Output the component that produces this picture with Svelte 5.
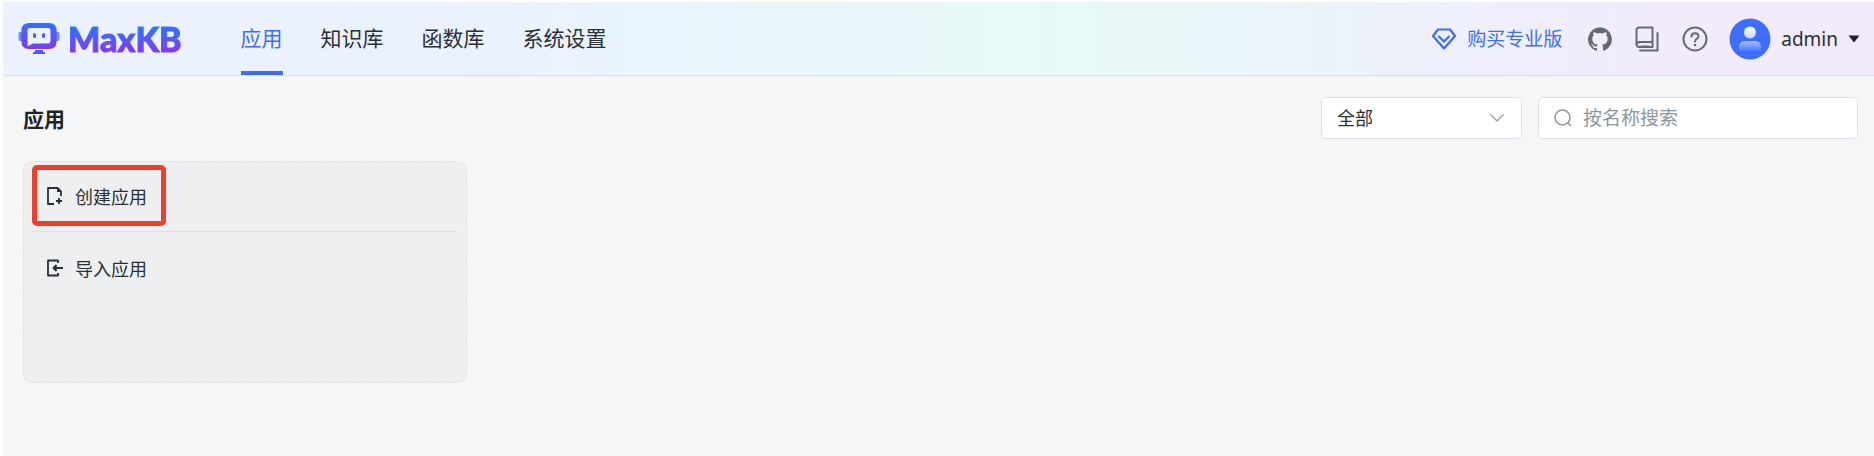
<script>
  const navItems = ['应用', '知识库', '函数库', '系统设置'];
  let active = $state('应用');
  let scope = $state('all');
  let keyword = $state('');
</script>

<div class="page">
  <header class="topbar">
    <a class="brand" href="#home" aria-label="MaxKB">
      <svg class="brand-icon" viewBox="0 0 42 32" aria-hidden="true">
        <defs>
          <linearGradient id="logo-fill" x1="0" y1="0" x2="0" y2="1">
            <stop offset="0" stop-color="#3370ff" />
            <stop offset="1" stop-color="#7f3bf5" />
          </linearGradient>
          <linearGradient id="logo-stand" x1="0" y1="0" x2="0" y2="1">
            <stop offset="0" stop-color="#3f6cf8" />
            <stop offset="1" stop-color="#7f3bf5" />
          </linearGradient>
        </defs>
        <path fill="#6f8cf8" d="M4 9H2Q.5 9 .5 11V16Q.5 18 2 18H4ZM38 9H40Q41.500 9 41.500 11V16Q41.500 18 40 18H38Z" />
        <path
          fill="url(#logo-fill)"
          fill-rule="evenodd"
          d="M11 0H31Q38.600 0 38.600 8V18Q38.600 26 31 26H11Q3.400 26 3.400 18V8Q3.400 0 11 0ZM12 5Q9.500 5 9.500 7.500V23.500L15 20.500H30Q32.500 20.500 32.500 18V7.500Q32.500 5 30 5Z"
        />
        <path fill="#5a57f5" d="M15 11.500Q15 10 16.500 10Q18 10 18 11.500V13.500Q18 15 16.500 15Q15 15 15 13.500ZM24 11.500Q24 10 25.500 10Q27 10 27 11.500V13.500Q27 15 25.500 15Q24 15 24 13.500Z" />
        <path fill="url(#logo-stand)" d="M17 27H25V29H27V31H15V29H17Z" />
      </svg>
      <span class="brand-name">MaxKB</span>
    </a>

    <nav class="nav" aria-label="主导航">
      {#each navItems as item}
        <a
          href="#{item}"
          class="nav-item"
          class:active={active === item}
          onclick={() => (active = item)}>{item}</a>
      {/each}
    </nav>

    <div class="tools">
      <a class="upgrade" href="#pro">
        <svg width="26" height="24" viewBox="0 0 26 24" fill="none" stroke="currentColor" stroke-width="2.2" stroke-linejoin="round" aria-hidden="true">
          <path d="M7 2.500H19L24 9L13 21.500L2 9Z" />
          <path d="M8 9.500L13 14.500L18 9.500" stroke-linecap="round" />
        </svg>
        <span>购买专业版</span>
      </a>
      <div class="links">
        <button type="button" aria-label="GitHub">
          <svg width="24" height="24" viewBox="0 0 24 24" fill="currentColor" aria-hidden="true">
            <path d="M12 .3a12 12 0 0 0-3.800 23.380c.6.12.83-.26.83-.57L9 21.070c-3.340.72-4.040-1.610-4.040-1.610-.55-1.390-1.340-1.760-1.340-1.760-1.080-.74.090-.73.090-.73 1.200.09 1.830 1.240 1.830 1.240 1.080 1.830 2.810 1.300 3.500 1 .1-.78.420-1.310.760-1.610-2.670-.3-5.470-1.330-5.470-5.930 0-1.310.470-2.380 1.240-3.220-.14-.3-.54-1.520.1-3.180 0 0 1-.32 3.300 1.230a11.500 11.500 0 0 1 6 0c2.280-1.550 3.290-1.230 3.290-1.230.64 1.660.24 2.880.12 3.180a4.650 4.650 0 0 1 1.230 3.220c0 4.610-2.800 5.630-5.480 5.920.42.36.81 1.100.81 2.220l-.01 3.290c0 .31.2.69.820.57A12 12 0 0 0 12 .3" />
          </svg>
        </button>
        <button type="button" aria-label="文档">
          <svg width="24" height="26" viewBox="0 0 24 26" fill="none" stroke="currentColor" stroke-width="2" stroke-linejoin="round" aria-hidden="true">
            <path d="M4 1.500H17.500V21H4A2.500 2.500 0 0 1 1.500 18.500V4A2.500 2.500 0 0 1 4 1.500Z" />
            <path d="M1.500 18.500A2.500 2.500 0 0 1 4 16H17.500" />
            <path d="M22.500 7V24.500H5" stroke-linecap="round" />
            <path d="M6 20.500H14" />
          </svg>
        </button>
        <button type="button" aria-label="帮助">
          <svg width="26" height="26" viewBox="0 0 26 26" fill="none" stroke="currentColor" stroke-width="2" aria-hidden="true">
            <circle cx="13" cy="13" r="11.500" />
            <path d="M9.500 10.500C9.500 8.500 11 7.200 13 7.200S16.500 8.500 16.500 10.200C16.500 12.600 13 12.800 13 15.500" stroke-linecap="round" />
            <circle cx="13" cy="19" r="1.300" fill="currentColor" stroke="none" />
          </svg>
        </button>
      </div>
      <button class="account" type="button">
        <svg width="42" height="42" viewBox="0 0 42 42" aria-hidden="true">
          <defs>
            <linearGradient id="avatar-head" x1="0" y1="0" x2="0" y2="1">
              <stop offset="0" stop-color="#fff" />
              <stop offset="1" stop-color="#c5d5ff" />
            </linearGradient>
            <linearGradient id="avatar-body" x1="0" y1="0" x2="0" y2="1">
              <stop offset="0" stop-color="#a9c1ff" />
              <stop offset="1" stop-color="#4a78ff" />
            </linearGradient>
          </defs>
          <circle cx="21" cy="21" r="20.500" fill="#3d6eff" />
          <path d="M10 33V29Q10 23 16 23H26Q32 23 32 29V33Z" fill="url(#avatar-body)" />
          <circle cx="21" cy="14.500" r="6" fill="url(#avatar-head)" />
        </svg>
        <span>admin</span>
        <svg width="12" height="8" viewBox="0 0 12 8" fill="#1f2329" aria-hidden="true">
          <path d="M.5.5H11.500L6 7.500Z" />
        </svg>
      </button>
    </div>
  </header>

  <main class="content">
    <div class="heading">
      <h1>应用</h1>
      <div class="filters">
        <div class="select-wrap">
          <select aria-label="范围" bind:value={scope}>
            <option value="all">全部</option>
          </select>
          <svg class="chevron" width="16" height="10" viewBox="0 0 16 10" fill="none" stroke="#a0a3a9" stroke-width="1.500" aria-hidden="true">
            <path d="M1.500 1.500L8 8L14.500 1.500" />
          </svg>
        </div>
        <label class="search">
          <svg width="18" height="18" viewBox="0 0 18 18" fill="none" stroke="#8f959e" stroke-width="1.500" aria-hidden="true">
            <circle cx="8.500" cy="8.500" r="7.500" />
            <path d="M14 14L17 17" />
          </svg>
          <input type="text" placeholder="按名称搜索" aria-label="按名称搜索" bind:value={keyword} />
        </label>
      </div>
    </div>

    <section class="card">
      <button class="action highlighted" type="button">
        <svg width="18" height="20" viewBox="0 0 18 20" fill="none" stroke="currentColor" stroke-width="1.800" stroke-linejoin="round" aria-hidden="true">
          <path d="M8 18H2V2H11.500L15 5.500V10" />
          <path d="M11 2L15 6H11Z" fill="currentColor" stroke="none" />
          <path d="M13 12V18M10 15H16" />
        </svg>
        <span>创建应用</span>
      </button>
      <hr />
      <button class="action" type="button">
        <svg width="18" height="20" viewBox="0 0 18 20" fill="none" stroke="currentColor" stroke-width="1.800" stroke-linejoin="round" aria-hidden="true">
          <path d="M12 5V2.500H2V17.500H12V15" />
          <path d="M17 10H8M10.500 7L7.500 10L10.500 13" />
          <path d="M7 10L10.500 7V13Z" fill="currentColor" stroke="none" />
        </svg>
        <span>导入应用</span>
      </button>
    </section>
  </main>
</div>

<style>
  :global(body) {
    background: #fff;
  }

  .page {
    box-sizing: border-box;
    min-height: 100vh;
    padding: 2px 0 0 3px;
    display: flex;
    flex-direction: column;
    font-family: 'Noto Sans', 'Noto Sans CJK SC', sans-serif;
    font-size: 18px;
    color: #2b2f36;
  }

  button,
  select,
  input {
    font: inherit;
    color: inherit;
    border: 0;
    padding: 0;
    background: none;
  }

  button {
    cursor: pointer;
  }

  a {
    color: inherit;
    text-decoration: none;
  }

  svg {
    display: block;
    flex: none;
  }

  .topbar {
    box-sizing: border-box;
    height: 74px;
    padding: 0 14px 0 15px;
    display: flex;
    align-items: center;
    border-bottom: 1px solid #dee0e8;
    background: linear-gradient(90deg, #ebf1ff 24%, #e6f9f7 56%, #f2ebfc 90%);
  }

  .brand {
    display: flex;
    align-items: center;
    gap: 8px;
  }

  .brand-icon {
    width: 42px;
    height: 32px;
  }

  .brand-name {
    font-family: Lato, sans-serif;
    font-size: 34px;
    font-weight: 900;
    line-height: 40px;
    color: transparent;
    -webkit-text-stroke: 1px transparent;
    background: linear-gradient(180deg, #3370ff 25%, #7f3bf5 80%);
    background-clip: text;
  }

  .nav {
    align-self: stretch;
    margin-left: 59px;
    display: flex;
    gap: 38px;
    font-size: 21px;
  }

  .nav-item {
    box-sizing: border-box;
    display: flex;
    align-items: center;
    border-bottom: 4px solid transparent;
  }

  .nav-item.active {
    color: #3d6cf5;
    border-bottom-color: #3d6cf5;
  }

  .tools {
    margin-left: auto;
    display: flex;
    align-items: center;
    color: #646a73;
  }

  .upgrade {
    display: flex;
    align-items: center;
    gap: 10px;
    font-size: 19px;
    line-height: 24px;
    color: #3d6cf5;
  }

  .links {
    margin: 0 21px 0 26px;
    display: flex;
    align-items: center;
    gap: 23px;
  }

  .account {
    display: flex;
    align-items: center;
    gap: 10px;
    font-size: 19px;
    line-height: 24px;
    color: #2b2f36;
  }

  .content {
    flex: 1;
    padding: 21px 16px 24px 20px;
    background: #f5f6f8;
  }

  .heading {
    display: flex;
    align-items: center;
    justify-content: space-between;
  }

  h1 {
    margin: 0;
    font-size: 21px;
    font-weight: 700;
    color: #1f2329;
  }

  .filters {
    display: flex;
    gap: 16px;
  }

  .select-wrap {
    position: relative;
    width: 201px;
  }

  select {
    box-sizing: border-box;
    width: 100%;
    height: 42px;
    padding: 0 40px 0 15px;
    appearance: none;
    border: 1px solid #dee0e3;
    border-radius: 5px;
    background: #fff;
  }

  .chevron {
    position: absolute;
    right: 17px;
    top: 16px;
    pointer-events: none;
  }

  .search {
    box-sizing: border-box;
    width: 320px;
    height: 42px;
    padding: 0 15px;
    display: flex;
    align-items: center;
    gap: 11px;
    border: 1px solid #dee0e3;
    border-radius: 5px;
    background: #fff;
  }

  .search input {
    flex: 1;
    min-width: 0;
    outline: 0;
    font-size: 19px;
  }

  .search input::placeholder {
    color: #8f959e;
    opacity: 1;
  }

  .card {
    box-sizing: border-box;
    width: 24.2%;
    min-width: 300px;
    min-height: 222px;
    margin-top: 22px;
    padding: 3px 9px 3px 8px;
    display: flex;
    flex-direction: column;
    align-items: flex-start;
    border: 1px dashed #dfe1e4;
    border-radius: 10px;
    background: #eeeff1;
  }

  .action {
    box-sizing: border-box;
    height: 61px;
    padding: 0 14px 0 9px;
    display: flex;
    align-items: center;
    gap: 11px;
    border: 5px solid transparent;
  }

  .highlighted {
    border-color: #ee3e2c;
    border-radius: 5px;
  }

  hr {
    width: 100%;
    height: 1px;
    margin: 5px 0;
    border: 0;
    background: #dfe1e4;
  }
</style>
